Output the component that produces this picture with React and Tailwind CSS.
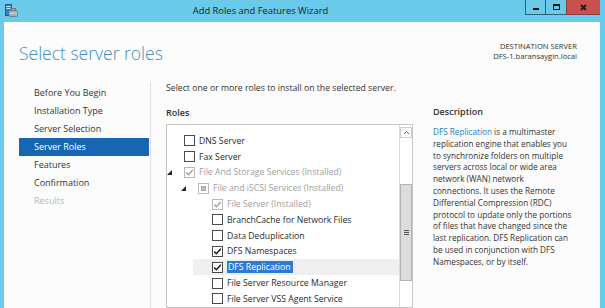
import React from "react";

const font = { fontFamily: '"Open Sans", "Noto Sans", sans-serif' };

const navItems = [
  { label: "Before You Begin" },
  { label: "Installation Type" },
  { label: "Server Selection" },
  { label: "Server Roles", active: true },
  { label: "Features" },
  { label: "Confirmation" },
  { label: "Results", disabled: true },
];

const roles = [
  { level: 0, state: "off", label: "DNS Server" },
  { level: 0, state: "off", label: "Fax Server" },
  { level: 0, state: "on", label: "File And Storage Services (Installed)", grey: true, tree: true },
  { level: 1, state: "mixed", label: "File and iSCSI Services (Installed)", grey: true, tree: true },
  { level: 2, state: "on", label: "File Server (Installed)", grey: true },
  { level: 2, state: "off", label: "BranchCache for Network Files" },
  { level: 2, state: "off", label: "Data Deduplication" },
  { level: 2, state: "on", label: "DFS Namespaces" },
  { level: 2, state: "on", label: "DFS Replication", selected: true },
  { level: 2, state: "off", label: "File Server Resource Manager" },
  { level: 2, state: "off", label: "File Server VSS Agent Service" },
];

const indent = { 0: "w-0", 1: "w-[12px]", 2: "w-[26px]" };
const slot = { 0: "w-[17px]", 1: "w-[19px]", 2: "w-[19px]" };

const descLines = [
  "replication engine that enables you",
  "to synchronize folders on multiple",
  "servers across local or wide area",
  "network (WAN) network",
  "connections. It uses the Remote",
  "Differential Compression (RDC)",
  "protocol to update only the portions",
  "of files that have changed since the",
  "last replication. DFS Replication can",
  "be used in conjunction with DFS",
  "Namespaces, or by itself.",
];

function AppIcon() {
  return (
    <svg width="13" height="13" viewBox="0 0 13 13">
      <rect x="0.5" y="0.5" width="6" height="11" fill="#2f80d2" stroke="#1d5ea8" />
      <rect x="1.5" y="2" width="4" height="1" fill="#cfe6fb" />
      <rect x="1.5" y="4" width="4" height="1" fill="#cfe6fb" />
      <rect x="6.5" y="4.5" width="4" height="2.5" fill="none" stroke="#6c757d" />
      <rect x="4" y="6.5" width="8.5" height="6" rx="1" fill="#a5adb5" stroke="#6c757d" strokeWidth="0.8" />
      <rect x="4.5" y="8.8" width="7.5" height="0.8" fill="#e8ecef" />
    </svg>
  );
}

function CheckBox({ state, grey }) {
  const border = grey ? "border-[#b8b8b8]" : "border-[#4a4a4a]";
  return (
    <div className={`w-[11px] h-[11px] shrink-0 border ${border} bg-white flex items-center justify-center`}>
      {state === "on" && (
        <svg width="9" height="9" viewBox="0 0 9 9">
          <path d="M1.2 4.6 L3.4 6.8 L7.8 1.8" fill="none" stroke={grey ? "#a0a0a0" : "#111"} strokeWidth="1.4" />
        </svg>
      )}
      {state === "mixed" && <div className="w-[5px] h-[5px] bg-[#bcbcbc] border border-[#a8a8a8]" />}
    </div>
  );
}

function Expander() {
  return (
    <svg width="5" height="5" viewBox="0 0 5 5" className="mr-[12px]">
      <polygon points="5,0 5,5 0,5" fill="#262626" />
    </svg>
  );
}

export default function App() {
  return (
    <div className="w-[605px] h-[308px] bg-[#69cbe9] overflow-hidden flex flex-col text-[#2b2b2b]" style={font}>
      {/* title bar */}
      <div className="h-[22px] flex items-start shrink-0">
        <div className="ml-[5px] mt-[4px]">
          <AppIcon />
        </div>
        <div className="flex-1 text-center pr-[22px] text-[9.4px] leading-[22px] text-[#1c1c1c]">Add Roles and Features Wizard</div>
        <div className="flex h-[15px] mr-[5px]">
          <div className="w-[21px] border-l border-b border-r border-[#2d6275] flex items-center justify-center">
            <div className="w-[6px] h-[2px] bg-[#111] mt-[3px]" />
          </div>
          <div className="w-[20px] border-b border-[#2d6275] flex items-center justify-center">
            <div className="w-[7px] h-[6px] border border-t-2 border-[#111]" />
          </div>
          <div className="w-[34px] bg-[#c75050] border-l border-b border-[#8e3b3b] flex items-center justify-center">
            <svg width="7" height="7" viewBox="0 0 7 7">
              <path d="M1 1 L6 6 M6 1 L1 6" stroke="#1b1b1b" strokeWidth="1.8" />
            </svg>
          </div>
        </div>
      </div>

      {/* window body */}
      <div className="flex-1 ml-[4px] mr-[5px] bg-[#fcfcfc] flex flex-col min-h-0">
        <div className="h-[60px] shrink-0 flex justify-between items-start pl-[15px] pr-[23px]">
          <div className="mt-[21px] text-[17.5px] leading-[20px] font-light text-[#3f8fc0]">Select server roles</div>
          <div className="mt-[19px] text-right text-[7.6px] leading-[10px] text-[#333]">
            <div>DESTINATION SERVER</div>
            <div>DFS-1.baransaygin.local</div>
          </div>
        </div>

        <div className="flex-1 flex min-h-0">
          {/* nav */}
          <div className="w-[146px] shrink-0 pl-[15px] pt-[2px]">
            {navItems.map((n) => (
              <div
                key={n.label}
                className={`w-[130px] h-[18px] pl-[15px] text-[9px] leading-[18px] ${
                  n.active ? "bg-[#1766b4] text-white" : n.disabled ? "text-[#b5b5b5]" : "text-[#333]"
                }`}
              >
                {n.label}
              </div>
            ))}
          </div>
          <div className="w-px bg-[#dcdcdc]" />

          {/* content */}
          <div className="flex-1 pl-[15px] flex flex-col min-h-0">
            <div className="h-[12px] text-[8.7px] leading-[12px] text-[#333]">Select one or more roles to install on the selected server.</div>
            <div className="flex-1 flex min-h-0">
              <div className="w-[247px] shrink-0 pt-[13px] flex flex-col min-h-0">
                <div className="text-[9px] leading-[12px] font-semibold text-[#333]">Roles</div>
                <div className="mt-[5px] flex-1 border border-[#c6c6c6] bg-white flex min-h-0 overflow-hidden">
                  <div className="flex-1 pt-[8px]">
                    {roles.map((r) => (
                      <div key={r.label} className="flex h-[15.8px] items-stretch">
                        <div className={`${indent[r.level]} shrink-0`} />
                        <div className={`flex-1 flex items-center ${r.selected ? "bg-[#efefef]" : ""}`}>
                          <div className={`${slot[r.level]} shrink-0 flex justify-end items-center`}>{r.tree && <Expander />}</div>
                          <CheckBox state={r.state} grey={r.grey} />
                          <span
                            className={`ml-[4px] text-[8.7px] leading-[12px] whitespace-nowrap ${
                              r.selected ? "bg-[#2d7ad6] text-white pl-px pr-[2px]" : r.grey ? "text-[#a0a0a0]" : "text-[#2b2b2b]"
                            }`}
                          >
                            {r.label}
                          </span>
                        </div>
                      </div>
                    ))}
                  </div>
                  {/* scrollbar */}
                  <div className="w-[13px] shrink-0 border-l border-[#dcdcdc] flex flex-col">
                    <div className="mt-[2px] h-[11px] border border-[#cfcfcf] bg-white flex items-center justify-center">
                      <svg width="7" height="5" viewBox="0 0 7 5">
                        <path d="M1 4 L3.5 1.5 L6 4" fill="none" stroke="#606060" strokeWidth="1" />
                      </svg>
                    </div>
                    <div className="mt-[46px] h-[97px] bg-[#dcdcdc] border border-[#b4b4b4] flex flex-col items-center justify-center gap-[1px]">
                      <div className="w-[5px] h-px bg-[#555]" />
                      <div className="w-[5px] h-px bg-[#555]" />
                      <div className="w-[5px] h-px bg-[#555]" />
                    </div>
                  </div>
                </div>
              </div>

              <div className="ml-[20px] pt-[12px] text-[#333]">
                <div className="text-[9px] leading-[12px] font-semibold">Description</div>
                <div className="mt-[8px] text-[8.2px] leading-[11.8px] whitespace-nowrap">
                  <div>
                    <span className="text-[#1f7fc0]">DFS Replication</span> is a multimaster
                  </div>
                  {descLines.map((l) => (
                    <div key={l}>{l}</div>
                  ))}
                </div>
              </div>
            </div>
          </div>
        </div>
      </div>
    </div>
  );
}
